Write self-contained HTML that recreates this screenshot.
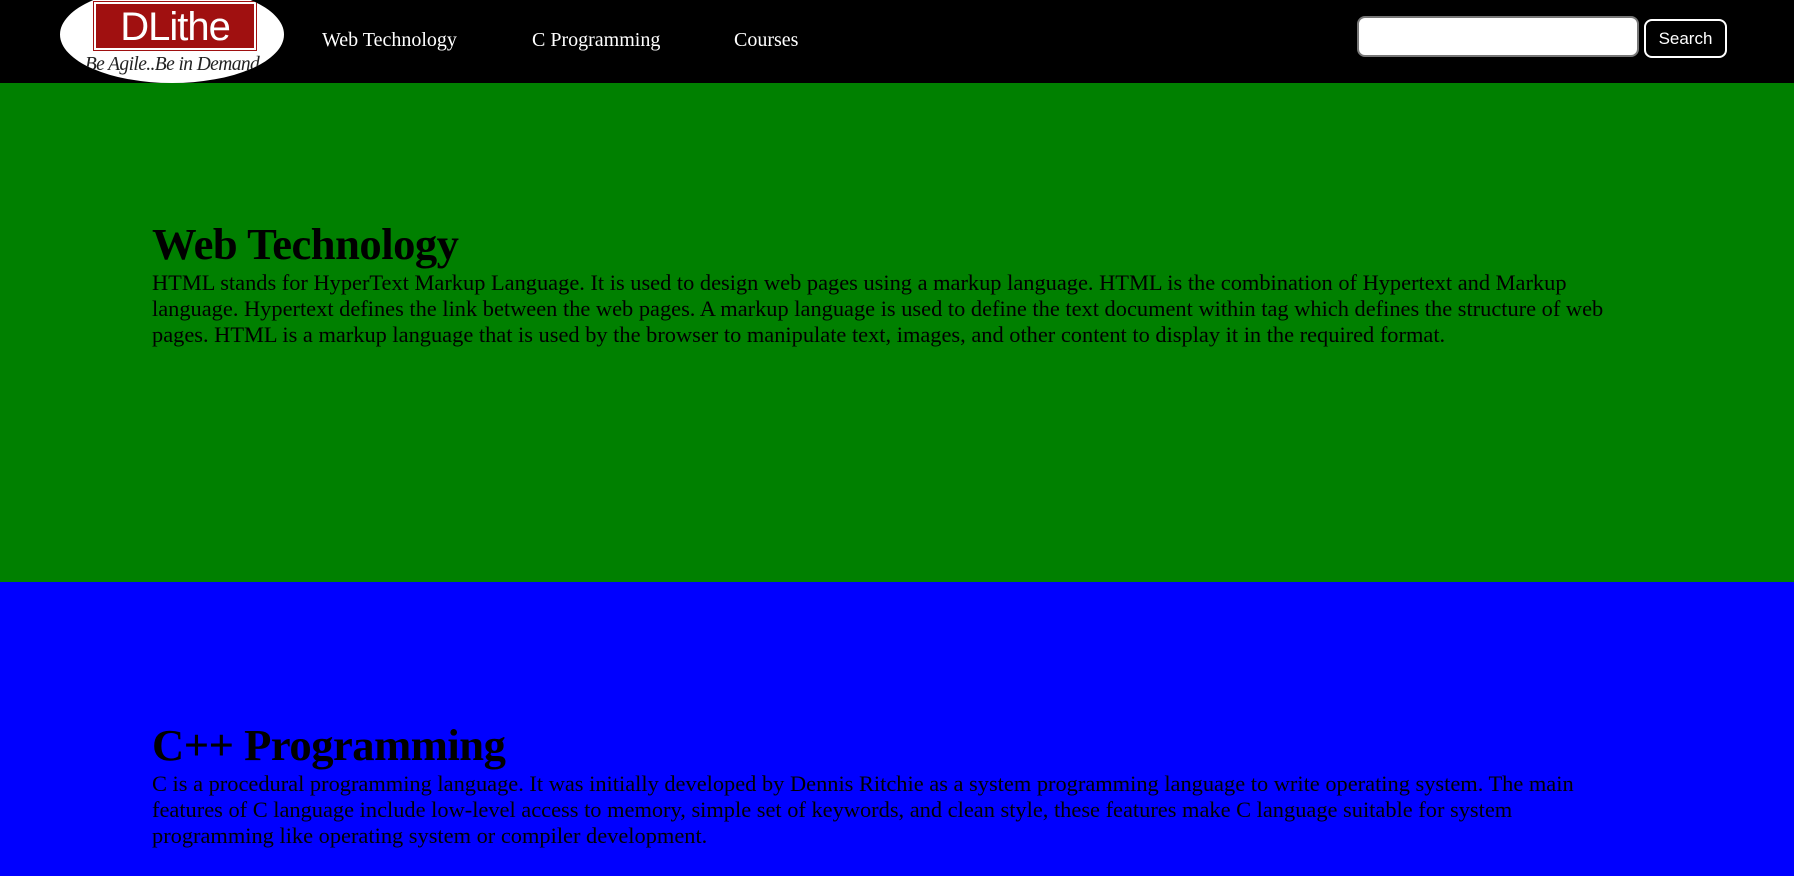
<!DOCTYPE html>
<html><head><meta charset="utf-8"><style>
*{box-sizing:border-box}
body{margin:0;width:1794px;height:876px;overflow:hidden;font-family:"Liberation Serif",serif;background:#00f}
.hdr{height:83px;background:#000;position:relative}
.logo{position:absolute;left:60px;top:-14px;width:224px;height:97px;background:#fff;border-radius:50%;overflow:hidden}
.logo .box{position:absolute;left:34px;top:16px;width:162px;height:48px;background:#a01010;color:#fff;font-family:"Liberation Sans",sans-serif;font-size:40px;text-align:center;line-height:46px;letter-spacing:-1px;border:2px solid #fff;outline:1px solid #a01010}
.logo .tag{position:absolute;left:0;right:0;top:68px;text-align:center;font-style:italic;font-size:19.5px;color:#222;letter-spacing:-0.6px}
.nav{position:absolute;top:29px;color:#fff;font-size:20px}
.inp{position:absolute;left:1357px;top:16px;width:282px;height:41px;background:#fff;border:2px solid #777;border-radius:8px}
.btn{position:absolute;left:1644px;top:19px;width:83px;height:39px;border:2px solid #fff;border-radius:8px;color:#fff;font-family:"Liberation Sans",sans-serif;font-size:17px;text-align:center;line-height:35px}
.sec{padding:135px 170px 0 152px;height:499px}
.g{background:#008000}
.b{background:#00f;height:294px;padding-top:137px}
h1{margin:0;font-size:44.6px;line-height:52px;letter-spacing:-0.5px}
p{margin:0;font-size:22.4px;line-height:26px}
</style></head><body>
<div class="hdr">
<div class="logo"><div class="box">DLithe</div><div class="tag">Be Agile..Be in Demand</div></div>
<div class="nav" style="left:322px">Web Technology</div>
<div class="nav" style="left:532px">C Programming</div>
<div class="nav" style="left:734px">Courses</div>
<div class="inp"></div>
<div class="btn">Search</div>
</div>
<div class="sec g"><h1>Web Technology</h1><p>HTML stands for HyperText Markup Language. It is used to design web pages using a markup language. HTML is the combination of Hypertext and Markup language. Hypertext defines the link between the web pages. A markup language is used to define the text document within tag which defines the structure of web pages. HTML is a markup language that is used by the browser to manipulate text, images, and other content to display it in the required format.</p></div>
<div class="sec b"><h1>C++ Programming</h1><p>C is a procedural programming language. It was initially developed by Dennis Ritchie as a system programming language to write operating system. The main features of C language include low-level access to memory, simple set of keywords, and clean style, these features make C language suitable for system programming like operating system or compiler development.</p></div>
</body></html>
